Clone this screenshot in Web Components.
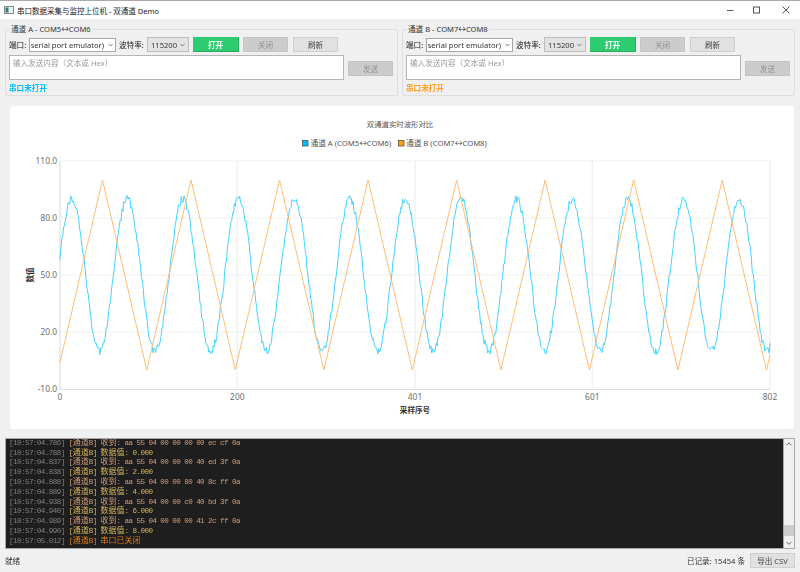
<!DOCTYPE html>
<html lang="zh"><head><meta charset="utf-8"><title>串口数据采集与监控上位机</title>
<style>
html,body{margin:0;padding:0;background:#f0f0f0}
body{width:800px;height:572px;overflow:hidden;font:7.6px "Noto Sans","Noto Sans CJK SC",sans-serif;color:#333}
</style></head><body>
<app-window></app-window>
<script>
const FONT='"Noto Sans","Noto Sans CJK SC",sans-serif';
function sh(el,html){el.attachShadow({mode:'open'}).innerHTML=html;}
class TitleBar extends HTMLElement{connectedCallback(){sh(this,`<style>
:host{display:flex;align-items:center;height:19px;background:#fff;border-top:1px solid #a8a8a8;padding-left:4px;box-sizing:border-box;color:#222;font-size:7.5px}
svg{display:block;flex:none}
.t{margin-left:3px;flex:1;white-space:nowrap}
.c{display:flex;align-items:center;gap:19px;padding-right:10px}
</style>
<svg width="10" height="8" viewBox="0 0 10 8"><rect x=".5" y=".5" width="9" height="7" fill="#f4f4f4" stroke="#7a8a8a"/><rect x="1.5" y="1.5" width="3" height="5" fill="#2a7f7a"/></svg>
<span class="t"><slot></slot></span>
<div class="c">
<svg width="7" height="8" viewBox="0 0 7 8"><path d="M0 4.5H6.5" stroke="#555"/></svg>
<svg width="7" height="8" viewBox="0 0 7 8"><rect x=".5" y="1" width="6" height="6" fill="none" stroke="#555"/></svg>
<svg style="margin-left:3px" width="8" height="8" viewBox="0 0 8 8"><path d="M.5.5L7.5 7.5M7.5.5L.5 7.5" stroke="#555"/></svg>
</div>`);}}
class UiButton extends HTMLElement{connectedCallback(){sh(this,`<style>
:host{display:flex;align-items:center;justify-content:center;flex:none;box-sizing:border-box;height:15px;width:45px;background:#e1e1e1;border:1px solid #cfcfcf;color:#444;font-size:7.6px}
:host([kind=go]){background:#2ecc71;border:0;border-bottom:1px solid #27ae60;border-right:1px solid #27ae60;color:#fff;font-weight:700;width:46px}
:host([kind=off]){background:#cccccc;border-color:#c4c4c4;color:#8f8f8f}
</style><slot></slot>`);}}
class ComboBox extends HTMLElement{connectedCallback(){sh(this,`<style>
:host{display:flex;align-items:center;flex:none;box-sizing:border-box;height:14px;background:#e3e3e3;border:1px solid #bdbdbd;padding:0 3px;overflow:hidden}
:host([white]){background:#fff;border-color:#a6a6a6;padding:0 2px 0 0}
.v{flex:1;min-width:0;overflow:hidden;white-space:nowrap;color:#333}
:host([white]) .v{display:flex;justify-content:flex-end}
svg{flex:none;margin-left:1px}
:host([white]) svg{margin-left:4px}
</style><div class="v"><span><slot></slot></span></div>
<svg width="5" height="4" viewBox="0 0 5 4"><path d="M.3.8L2.5 3L4.7.8" fill="none" stroke="#666" stroke-width=".8"/></svg>`);}}
class SerialPanel extends HTMLElement{connectedCallback(){
const t=this.getAttribute('heading'),c=this.getAttribute('color');
sh(this,`<style>
:host{display:block;flex:1 1 0;min-width:0;position:relative;box-sizing:border-box;height:67px;border:1px solid #dedede;border-radius:2px;padding:7px 3px 0}
.h{position:absolute;left:4px;top:-6px;background:#f0f0f0;padding:0 1px;white-space:nowrap;line-height:11px;color:#333}
.r{display:flex;align-items:center;height:15px}
.l{flex:none;white-space:nowrap;color:#222}
.r2{display:flex;align-items:center;height:25px;margin-top:3px}
.in{box-sizing:border-box;flex:none;width:335px;height:25px;background:#fff;border:1px solid #b5b5b5;padding:2px 3px;color:#9a9a9a;line-height:11px}
.s{margin-top:4px;font-weight:700;line-height:9px;color:${c}}
</style>
<div class="h">${t}</div>
<div class="r"><span class="l" style="width:20px">端口:</span>
<combo-box white style="width:87px">serial port emulator)</combo-box>
<span class="l" style="width:26px;margin-left:3px">波特率:</span>
<combo-box style="width:42px;margin-left:2px;height:15px">115200</combo-box>
<ui-button kind="go" style="margin-left:4px">打开</ui-button>
<ui-button kind="off" style="margin-left:4px">关闭</ui-button>
<ui-button style="margin-left:5px">刷新</ui-button></div>
<div class="r2"><div class="in">输入发送内容（文本或 Hex）</div><ui-button kind="off" style="margin-left:4px;margin-top:1px">发送</ui-button></div>
<div class="s">串口未打开</div>`);}}
class WaveChart extends HTMLElement{connectedCallback(){
const L=60,R=770,T=161,B=389,sx=(R-L)/802,X=i=>L+i*sx,Y=v=>B-(v+10)*1.9;
let s=0x2f6e2b1;const rnd=()=>{s|=0;s=s+0x6D2B79F5|0;let t=Math.imul(s^s>>>15,1|s);t=t+Math.imul(t^t>>>7,61|t)^t;return((t^t>>>14)>>>0)/4294967296;};
let a='',b='';
for(let i=0;i<=802;i++){
 const v=50+40*Math.sin(.1*i+.25)+(rnd()-.5)*4.2;
 a+=X(i).toFixed(2)+','+Y(v).toFixed(2)+' ';
}
for(let i=0;i<=802;i+=1){
 const p=((i+2)%100+100)%100,v=p<=50?p*2:200-p*2;
 b+=X(i).toFixed(2)+','+Y(v).toFixed(2)+' ';
}
const ys=[[110,161],[80,218],[50,275],[20,332],[-10,389]];
const xs=[[0,60],[200,237.3],[401,415],[601,592.3],[802,770]];
let g='';
ys.slice(0,4).forEach(y=>g+=`<line x1="${L}" x2="${R}" y1="${y[1]}" y2="${y[1]}"/>`);
xs.slice(1).forEach(x=>g+=`<line x1="${x[1]}" x2="${x[1]}" y1="${T}" y2="${B}"/>`);
let lab='';
ys.forEach(y=>lab+=`<text x="57" y="${y[1]+3}" text-anchor="end">${y[0].toFixed(1)}</text>`);
xs.forEach(x=>lab+=`<text x="${x[1]}" y="400" text-anchor="middle">${x[0]}</text>`);
sh(this,`<style>
:host{display:block;height:323px;background:#fff;border-radius:3px;overflow:hidden}
svg{display:block}
text{font-family:${FONT};font-size:8.4px;fill:#6e6e6e}
.g line{stroke:#efefef;stroke-width:1.2}
.t{font-size:7.4px;fill:#555}
.lg{font-size:7.7px;fill:#555}
.ax{font-size:7.6px;font-weight:700;fill:#333}
</style>
<svg width="779" height="323" viewBox="10 106 779 323">
<text class="t" x="400" y="127" text-anchor="middle">双通道实时波形对比</text>
<rect x="302.5" y="140.5" width="5.5" height="5.5" fill="#00bfff" stroke="#444" stroke-width=".7"/>
<text class="lg" x="310.5" y="146">通道 A (COM5↔COM6)</text>
<rect x="398.5" y="140.5" width="5.5" height="5.5" fill="#ff9f1c" stroke="#444" stroke-width=".7"/>
<text class="lg" x="406" y="146">通道 B (COM7↔COM8)</text>
<g class="g">${g}</g>
<path d="M60 161V389.5H770" fill="none" stroke="#dfdfdf" stroke-width="1.2"/>
<polyline points="${a}" fill="none" stroke="#45d2ff" stroke-width="1"/>
<polyline points="${b}" fill="none" stroke="#ffbc72" stroke-width="1"/>
${lab}
<text class="ax" x="415" y="413" text-anchor="middle">采样序号</text>
<text class="ax" transform="translate(33 275) rotate(-90)" text-anchor="middle">数值</text>
</svg>`);}}
class LogView extends HTMLElement{connectedCallback(){
const rows=[['10:57:04.786','r','收到: aa 55 04 00 00 00 00 ec cf 0a'],['10:57:04.788','d','数据值: 0.000'],
['10:57:04.837','r','收到: aa 55 04 00 00 00 40 ed 3f 0a'],['10:57:04.838','d','数据值: 2.000'],
['10:57:04.888','r','收到: aa 55 04 00 00 80 40 8c ff 0a'],['10:57:04.889','d','数据值: 4.000'],
['10:57:04.938','r','收到: aa 55 04 00 00 c0 40 bd 3f 0a'],['10:57:04.940','d','数据值: 6.000'],
['10:57:04.989','r','收到: aa 55 04 00 00 00 41 2c ff 0a'],['10:57:04.990','d','数据值: 8.000'],
['10:57:05.012','x','串口已关闭']];
const cj=s=>s.replace(/[\u4e00-\u9fff]+/g,m=>`<span class="cj">${m}</span>`);
const html=rows.map(r=>`<div class="ln"><span class="ts">[${r[0]}]</span> <span class="${r[1]}">${cj('[通道B] '+r[2])}</span></div>`).join('');
sh(this,`<style>
:host{display:flex;box-sizing:border-box;height:111px;margin-top:9px;border:1px solid #a9a9a9;background:#f0f0f0}
.b{flex:1;min-width:0;background:#1e1e1e;overflow:hidden;display:flex;flex-direction:column;justify-content:flex-end;padding:0 0 3.4px 3px;border-right:1px solid #a9a9a9}
.ln{height:9.8px;flex:none;white-space:pre;font:7.6px/9.8px "Liberation Mono",monospace;letter-spacing:-.58px}
.cj{font:8px/9.8px "Noto Sans CJK SC",sans-serif;letter-spacing:0}
.ts{color:#7f7f7f}.r{color:#ce9b78}.d{color:#d4b45a}.x{color:#e07b1a}
.sb{flex:none;width:10px;display:flex;flex-direction:column;align-items:center;justify-content:space-between;background:#f0f0f0}
.th{width:100%;height:11px;background:#cdcdcd;margin:auto 0 2px}
svg{flex:none;margin:3px 0}
</style><div class="b">${html}</div>
<div class="sb"><svg width="6" height="4" viewBox="0 0 6 4"><path d="M.5 3.3L3 .8L5.5 3.3" fill="none" stroke="#666"/></svg>
<div class="th"></div>
<svg width="6" height="4" viewBox="0 0 6 4"><path d="M.5.8L3 3.3L5.5.8" fill="none" stroke="#666"/></svg></div>`);}}
class StatusBar extends HTMLElement{connectedCallback(){sh(this,`<style>
:host{display:flex;align-items:center;height:22px;color:#333}
.l{flex:1}.r{margin-right:5px}
</style><span class="l">就绪</span><span class="r">已记录: 15454 条</span><ui-button style="width:45px;height:15px">导出 CSV</ui-button>`);}}
class AppWindow extends HTMLElement{connectedCallback(){sh(this,`<style>
:host{display:flex;flex-direction:column;width:800px;height:572px;font:7.6px ${FONT};color:#333;filter:blur(.3px)}
.m{display:flex;flex-direction:column;padding:0 5px;flex:1}
.top{display:flex;gap:4px;margin-top:10px}
wave-chart{margin:10px 1px 0 5px}
</style>
<title-bar>串口数据采集与监控上位机 - 双通道 Demo</title-bar>
<div class="m">
<div class="top"><serial-panel heading="通道 A - COM5↔COM6" color="#00bfff"></serial-panel><serial-panel heading="通道 B - COM7↔COM8" color="#ff9f1c"></serial-panel></div>
<wave-chart></wave-chart>
<log-view></log-view>
<status-bar></status-bar>
</div>`);}}
customElements.define('title-bar',TitleBar);
customElements.define('ui-button',UiButton);
customElements.define('combo-box',ComboBox);
customElements.define('serial-panel',SerialPanel);
customElements.define('wave-chart',WaveChart);
customElements.define('log-view',LogView);
customElements.define('status-bar',StatusBar);
customElements.define('app-window',AppWindow);
</script>
</body></html>
